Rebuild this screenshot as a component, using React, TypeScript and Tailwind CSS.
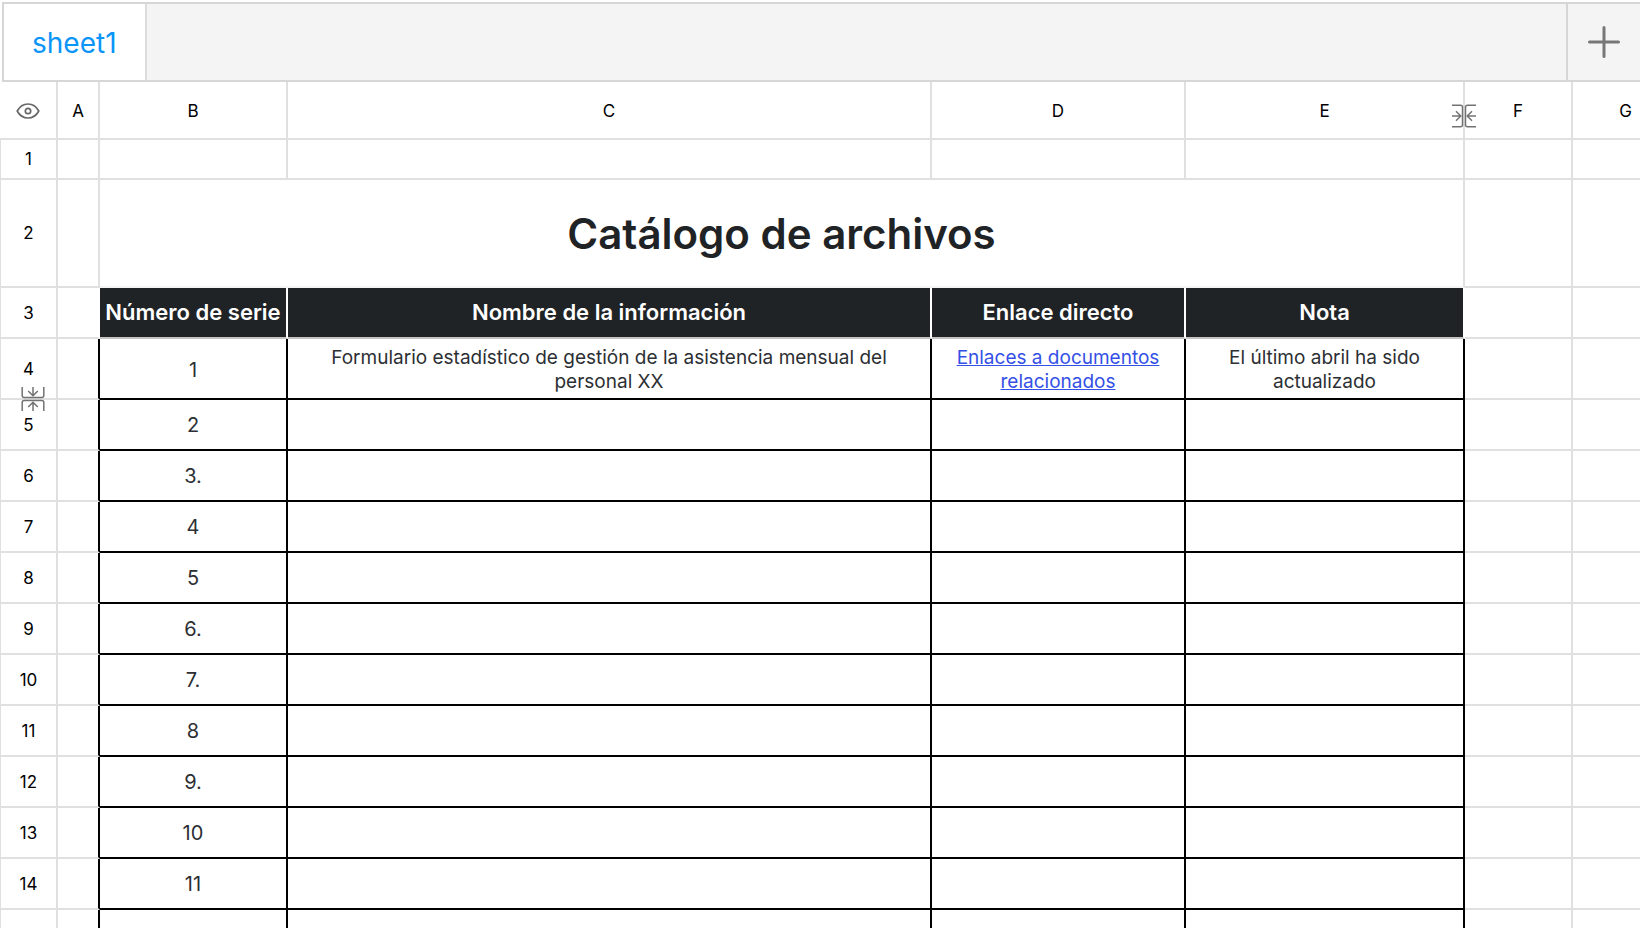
const columns = ["A", "B", "C", "D", "E", "F", "G"];
const rows = [
  { label: "5", serial: "2" },
  { label: "6", serial: "3." },
  { label: "7", serial: "4" },
  { label: "8", serial: "5" },
  { label: "9", serial: "6." },
  { label: "10", serial: "7." },
  { label: "11", serial: "8" },
  { label: "12", serial: "9." },
  { label: "13", serial: "10" },
  { label: "14", serial: "11" },
  { label: "", serial: "" },
];

const head = "border-b-2 border-r-2 border-[#e0e0e0] p-0 text-[17px] font-normal text-black";
const rowHead = `${head} border-l pt-[2px]`;
const plain = "border-b-2 border-r-2 border-[#e0e0e0] p-0";
const beside = "border-b-2 border-r-2 border-b-[#e0e0e0] border-r-black p-0";
const dark = "border-b-2 border-r-2 border-b-[#c4c4c4] border-r-white bg-[#1f2326] p-0 text-[22px] font-semibold text-white";
const inked = "border-b-2 border-r-2 border-black p-0 text-center leading-6 text-[#2c2f33]";

function EyeIcon() {
  return (
    <svg width="24" height="18" viewBox="0 0 24 18" fill="none" stroke="#686868" strokeWidth="1.7">
      <path d="M1.200 9C3.600 4.600 7.400 2 12 2s8.400 2.600 10.800 7c-2.400 4.400-6.200 7-10.800 7S3.600 13.400 1.200 9Z" strokeLinejoin="round" />
      <circle cx="12" cy="9" r="2.700" />
    </svg>
  );
}

function HiddenMark({ className }: { className?: string }) {
  return (
    <svg className={className} width="24" height="24" viewBox="0 0 24 24" fill="none" stroke="#737373" strokeWidth="1.500">
      <path d="M0 1.200h8.500q2 0 2 2v17.600q0 2-2 2H0M24 1.200h-8.500q-2 0-2 2v17.600q0 2 2 2H24" />
      <path d="M0 12h8.500M4 7.200 8.800 12 4 16.800M24 12h-8.500M20 7.200 15.200 12l4.800 4.800" />
    </svg>
  );
}

export default function App() {
  return (
    <div className="h-screen overflow-hidden bg-white font-['Inter','Liberation_Sans',sans-serif]">
      <div className="pl-[2px] pt-[2px]">
        <nav aria-label="Hojas" className="flex h-20 border-y-2 border-l-2 border-[#d6d6d6] bg-[#f4f4f4]">
          <button type="button" className="border-r-2 border-[#dcdcdc] bg-white px-7 pt-[2px] text-[28px] text-[#0a95f7]">
            sheet1
          </button>
          <button
            type="button"
            aria-label="Agregar hoja"
            className="ml-auto flex w-[74px] items-center justify-center border-l-2 border-[#d6d6d6]"
          >
            <svg width="32" height="32" viewBox="0 0 32 32" fill="none" stroke="#777" strokeWidth="3" strokeLinecap="round">
              <path d="M16 1.500v29M1.500 16h29" />
            </svg>
          </button>
        </nav>
      </div>
      <table className="w-[calc(100%+40px)] table-fixed border-separate border-spacing-0">
        <colgroup>
          <col className="w-[58px]" />
          <col className="w-[42px]" />
          <col className="w-[188px]" />
          <col />
          <col className="w-[254px]" />
          <col className="w-[279px]" />
          <col className="w-[108px]" />
          <col className="w-[107px]" />
        </colgroup>
        <thead>
          <tr className="h-[58px]">
            <th className={`${head} pt-[2px]`}>
              <button type="button" aria-label="Mostrar" className="mx-auto block">
                <EyeIcon />
              </button>
            </th>
            {columns.map((name) => (
              <th key={name} scope="col" className={`${head} relative pt-1`}>
                {name}
                {name === "E" && <HiddenMark className="absolute -right-[13px] bottom-[10px] z-10" />}
              </th>
            ))}
          </tr>
        </thead>
        <tbody>
          <tr className="h-10">
            <th scope="row" className={rowHead}>1</th>
            {columns.map((name) => (
              <td key={name} className={plain} />
            ))}
          </tr>
          <tr className="h-[108px]">
            <th scope="row" className={rowHead}>2</th>
            <td className={plain} />
            <td colSpan={4} className="border-b-2 border-r-2 border-b-[#f4f4f4] border-r-[#e0e0e0] p-0 pt-[2px] text-center">
              <h1 className="text-[42px] font-semibold leading-none text-[#1f2326]">Catálogo de archivos</h1>
            </td>
            <td className={plain} />
            <td className={plain} />
          </tr>
          <tr className="h-[51px]">
            <th scope="row" className={rowHead}>3</th>
            <td className="border-b-2 border-r-2 border-b-[#e0e0e0] border-r-white p-0" />
            <td className={`${dark} whitespace-nowrap text-center`}>Número de serie</td>
            <td className={`${dark} text-center`}>Nombre de la información</td>
            <td className={`${dark} text-center`}>Enlace directo</td>
            <td className={`${dark} text-center`}>Nota</td>
            <td className={plain} />
            <td className={plain} />
          </tr>
          <tr className="h-[61px]">
            <th scope="row" className={`${rowHead} relative`}>
              4
              <HiddenMark className="absolute -bottom-[13px] left-5 z-10 rotate-90" />
            </th>
            <td className={beside} />
            <td className={`${inked} pt-[2px] text-[20px]`}>1</td>
            <td className={`${inked} px-8 pt-[2px] text-[19px]`}>
              Formulario estadístico de gestión de la asistencia mensual del personal XX
            </td>
            <td className={`${inked} px-4 pt-[2px] text-[19px]`}>
              <a href="#documentos" className="text-[#3450e6] underline">
                Enlaces a documentos relacionados
              </a>
            </td>
            <td className={`${inked} px-8 pt-[2px] text-[19px]`}>El último abril ha sido actualizado</td>
            <td className={plain} />
            <td className={plain} />
          </tr>
          {rows.map(({ label, serial }) => (
            <tr key={label} className="h-[51px]">
              <th scope="row" className={rowHead}>{label}</th>
              <td className={beside} />
              <td className={`${inked} text-[20px]`}>{serial}</td>
              <td className={inked} />
              <td className={inked} />
              <td className={inked} />
              <td className={plain} />
              <td className={plain} />
            </tr>
          ))}
        </tbody>
      </table>
    </div>
  );
}
